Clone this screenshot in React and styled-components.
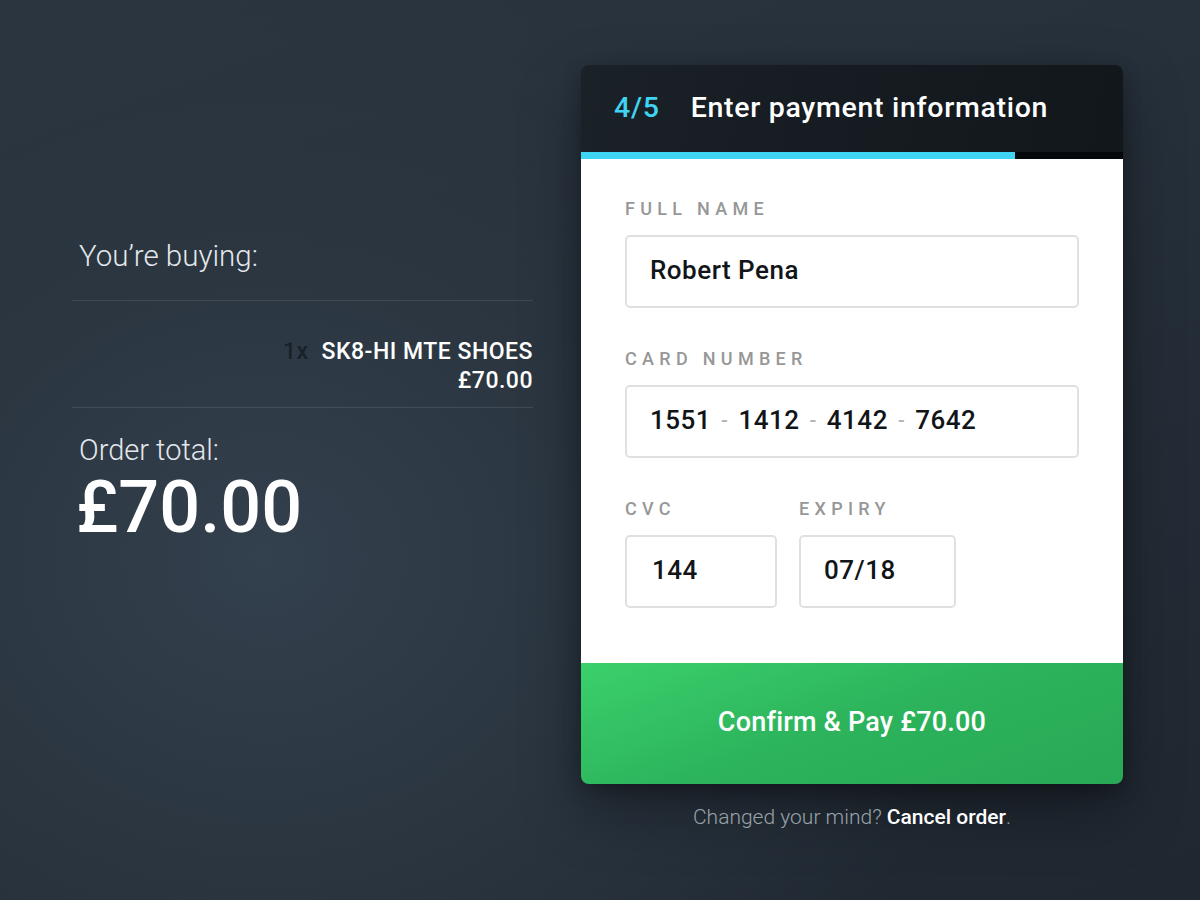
import React from "react";
import styled, { createGlobalStyle } from "styled-components";

const GlobalStyle = createGlobalStyle`
	html, body {
		margin:0;
		padding:0;
	}
	body {
		font-family:Roboto, "Liberation Sans", sans-serif;
		background:#252e38;
	}
	* { box-sizing:border-box; }
`;

const Page = styled.div`
	width:1200px;
	height:900px;
	display:flex;
	align-items:flex-start;
	gap:48px;
	padding:65px 0 0 72px;
	background:
		radial-gradient(ellipse 60% 70% at 22% 62%, #33404d 0%, #2b3641 45%, rgba(34,42,51,0) 100%),
		linear-gradient(160deg, #2b3540 0%, #242d37 60%, #1f2730 100%);
	overflow:hidden;
`;

const Summary = styled.div`
	width:461px;
	margin-top:174px;
	color:#fff;
`;

const Heading = styled.div`
	font-size:29.5px;
	font-weight:300;
	line-height:34px;
	padding-left:7px;
	color:#e4e8ec;
	margin-bottom:27px;
`;

const Divider = styled.div`
	height:1px;
	background:rgba(255,255,255,0.1);
`;

const Items = styled.div`
	padding:36px 0 12px;
	text-align:right;
`;

const ItemRow = styled.div`
	font-size:23px;
	font-weight:500;
	line-height:29px;
	letter-spacing:0.5px;
	color:#fff;
`;

const Qty = styled.span`
	color:#1a2129;
	margin-right:13px;
`;

const TotalLabel = styled.div`
	font-size:29px;
	font-weight:300;
	line-height:34px;
	padding-left:7px;
	color:#e4e8ec;
	margin-top:25px;
`;

const TotalValue = styled.div`
	font-size:72px;
	font-weight:500;
	line-height:70px;
	padding-left:4px;
	margin-top:6px;
	color:#fff;
`;

const Column = styled.div`
	width:542px;
	display:flex;
	flex-direction:column;
`;

const Card = styled.div`
	border-radius:8px;
	overflow:hidden;
	box-shadow:0 25px 60px rgba(0,0,0,0.35), 0 6px 18px rgba(0,0,0,0.25);
`;

const Header = styled.div`
	height:87px;
	display:flex;
	align-items:center;
	padding:0 0 2px 33px;
	background:linear-gradient(100deg, #1a2127 0%, #11171b 100%);
	font-size:28.5px;
	font-weight:500;
	letter-spacing:0.7px;
`;

const Step = styled.span`
	color:#3fd3f4;
	margin-right:31px;
`;

const Title = styled.span`
	color:#fff;
`;

const Progress = styled.div`
	height:7px;
	background:#05080a;
`;

const ProgressFill = styled.div`
	height:100%;
	background:#3fd3f4;
`;

const Body = styled.div`
	background:#fff;
	padding:40px 44px 55px;
	display:flex;
	flex-direction:column;
	gap:41px;
`;

const Field = styled.div`
	display:flex;
	flex-direction:column;
	width:${(p) => p.width || "100%"};
`;

const Row = styled.div`
	display:flex;
	gap:22px;
`;

const Label = styled.div`
	font-size:18px;
	font-weight:500;
	line-height:20px;
	letter-spacing:5.3px;
	color:#979797;
	margin-bottom:16px;
`;

const Input = styled.div`
	height:73px;
	border:2px solid #e0e0e0;
	border-radius:5px;
	display:flex;
	align-items:center;
	padding:0 0 4px ${(p) => p.pad || 23}px;
	font-size:26px;
	font-weight:500;
	letter-spacing:0.5px;
	color:#111518;
`;

const Dash = styled.span`
	color:#b5b5b5;
	font-size:20px;
	margin:0 10px;
`;

const PayButton = styled.button`
	height:121px;
	border:none;
	width:100%;
	background:linear-gradient(160deg, #3bd06c 0%, #2cb35b 50%, #28a955 100%);
	color:#fff;
	font-family:Roboto, "Liberation Sans", sans-serif;
	font-size:27px;
	font-weight:500;
	letter-spacing:0.2px;
	cursor:pointer;
	padding:0 0 4px;
`;

const Footer = styled.div`
	margin-top:21px;
	text-align:center;
	font-size:21px;
	font-weight:300;
	line-height:24px;
	color:#9aa2ab;
`;

const Cancel = styled.a`
	color:#fff;
	font-weight:500;
	text-decoration:none;
`;

export default function App() {
	const step = 4;
	const steps = 5;
	return (
		<>
			<GlobalStyle />
			<Page>
				<Summary>
					<Heading>You’re buying:</Heading>
					<Divider />
					<Items>
						<ItemRow>
							<Qty>1x</Qty>SK8-HI MTE SHOES
						</ItemRow>
						<ItemRow>£70.00</ItemRow>
					</Items>
					<Divider />
					<TotalLabel>Order total:</TotalLabel>
					<TotalValue>£70.00</TotalValue>
				</Summary>
				<Column>
					<Card>
						<Header>
							<Step>
								{step}/{steps}
							</Step>
							<Title>Enter payment information</Title>
						</Header>
						<Progress>
							<ProgressFill style={{ width: `${(step / steps) * 100}%` }} />
						</Progress>
						<Body>
							<Field>
								<Label>FULL NAME</Label>
								<Input>Robert Pena</Input>
							</Field>
							<Field>
								<Label>CARD NUMBER</Label>
								<Input>
									1551<Dash>-</Dash>1412<Dash>-</Dash>4142<Dash>-</Dash>7642
								</Input>
							</Field>
							<Row>
								<Field width="152px">
									<Label>CVC</Label>
									<Input pad={25}>144</Input>
								</Field>
								<Field width="157px">
									<Label>EXPIRY</Label>
									<Input pad={23}>07/18</Input>
								</Field>
							</Row>
						</Body>
						<PayButton>Confirm &amp; Pay £70.00</PayButton>
					</Card>
					<Footer>
						Changed your mind? <Cancel href="#">Cancel order</Cancel>.
					</Footer>
				</Column>
			</Page>
		</>
	);
}
